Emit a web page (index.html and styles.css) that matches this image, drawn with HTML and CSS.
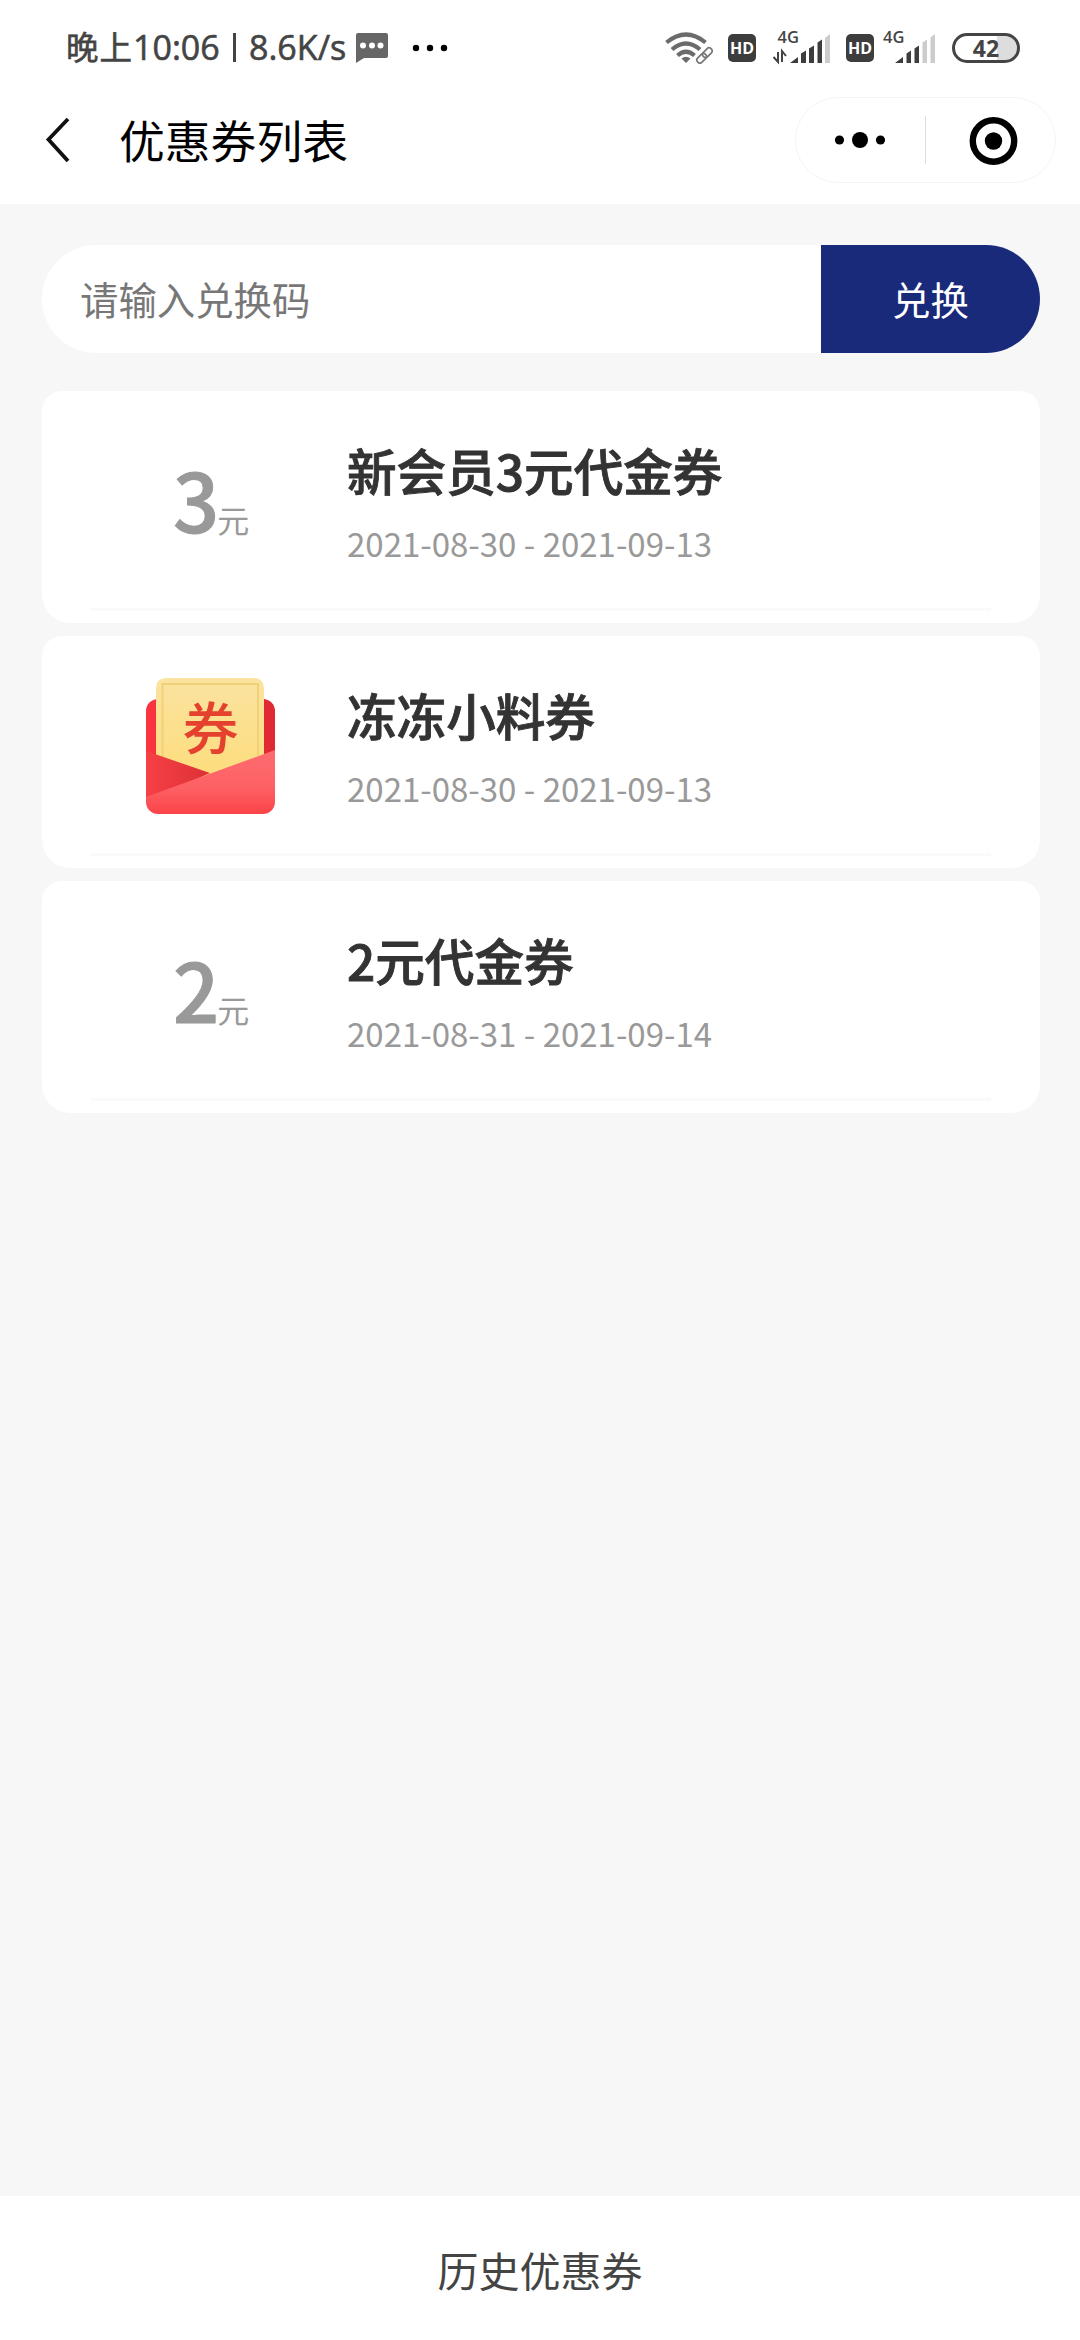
FILE: index.html
```html
<!DOCTYPE html>
<html lang="zh-CN">
<head>
<meta charset="utf-8">
<title>优惠券列表</title>
<link rel="stylesheet" href="styles.css">
</head>
<body>
<div class="page">
  <div class="status">
    <span class="clock"><span class="cn">晚上</span>10:06</span>
    <span class="divider"></span>
    <span class="speed">8.6K/s</span>
    <svg class="bubble" width="34" height="32" viewBox="0 0 34 32"><path d="M3 1H31Q33 1 33 3V24Q33 26 31 26H9L1 31V3Q1 1 3 1Z" fill="#666"/><g fill="#fff"><circle cx="8" cy="13.500" r="3"/><circle cx="17" cy="13.500" r="3"/><circle cx="25.500" cy="13.500" r="3"/></g></svg>
    <svg class="more" width="36" height="8" viewBox="0 0 36 8"><circle cx="4" cy="4" r="3.200"/><circle cx="18" cy="4" r="3.200"/><circle cx="32" cy="4" r="3.200"/></svg>
    <div class="signals">
      <svg class="wifi" width="48" height="32" viewBox="0 0 48 32"><g fill="none" stroke="#6b6b6b" stroke-width="4.200"><path d="M1.500 10.500Q21 -5.500 40.500 10.500"/><path d="M7 17.500Q21 5.500 35 17.500"/><path d="M12.500 23.500Q21 16 29.500 23.500"/></g><path d="M16.500 26.500Q21 23 25.500 26.500L21 31Z" fill="#6b6b6b"/><g fill="none" stroke="#777" stroke-width="1.700" transform="rotate(-45 39.500 23.500)"><rect x="30" y="20.500" width="11" height="6" rx="3"/><rect x="38" y="20.500" width="11" height="6" rx="3"/></g></svg>
      <span class="hd">HD</span>
      <svg class="cell first" width="58" height="46" viewBox="0 -6 58 46"><text class="net" x="4.500" y="12">4G</text><path d="M0.500 26L5 31V21M9 31V20L13 25" fill="none" stroke="#444" stroke-width="2"/><g fill="#3d3d3d"><path d="M17 32L25 26V32ZM28 32V22.500L33 19.500V32ZM36 32V17.500L41 14.500V32ZM44.500 32V11.500L49 8.500V32Z"/><path d="M52 32V7L57 3V32Z" fill="#ccc"/></g></svg>
      <span class="hd">HD</span>
      <svg class="cell second" width="54" height="46" viewBox="0 -6 54 46"><text class="net" x="0" y="12">4G</text><g fill="#3d3d3d"><path d="M12 32L20 26V32ZM23.500 32V22.500L28 19.500V32ZM31.500 32V17.500L36 14.500V32Z"/><path d="M39.500 32V11.500L44 8.500V32ZM47.500 32V6.500L52 3V32Z" fill="#ccc"/></g></svg>
      <span class="battery">42</span>
    </div>
  </div>
  <header class="nav">
    <svg class="back" width="26" height="46" viewBox="0 0 26 46"><path d="M23 2L3.500 22.500L23 44" fill="none" stroke="#111" stroke-width="3.800"/></svg>
    <h1 class="nav-title">优惠券列表</h1>
    <div class="capsule">
      <svg width="129" height="84" viewBox="0 0 129 84"><circle cx="43.500" cy="42" r="4.600"/><circle cx="64" cy="42" r="8"/><circle cx="84.500" cy="42" r="4.600"/></svg>
      <span class="capsule-line"></span>
      <svg width="129" height="84" viewBox="0 0 129 84"><circle cx="67.500" cy="43" r="20.700" fill="none" stroke="#000" stroke-width="6.400"/><circle cx="67.500" cy="43" r="8.700"/></svg>
    </div>
  </header>
  <main class="content">
    <div class="redeem">
      <span class="placeholder">请输入兑换码</span>
      <span class="redeem-btn">兑换</span>
    </div>
    <section class="coupons">
      <article class="coupon">
        <div class="value"><b>3</b><span>元</span></div>
        <div class="info"><h2>新会员3元代金券</h2><p>2021-08-30 - 2021-09-13</p></div>
      </article>
      <article class="coupon">
        <div class="value picture">
          <svg width="130" height="138" viewBox="0 0 130 138">
            <defs>
              <linearGradient id="back" x2="1"><stop stop-color="#fa3440"/><stop offset="1" stop-color="#df2932"/></linearGradient>
              <linearGradient id="paper" x2="0" y2="1"><stop stop-color="#fbe3a0"/><stop offset="1" stop-color="#fddc78"/></linearGradient>
              <linearGradient id="flap" x1="0" x2="1"><stop stop-color="#f64046"/><stop offset="1" stop-color="#dc3136"/></linearGradient>
              <linearGradient id="front" x1=".5" x2=".5" y2="1"><stop stop-color="#fe6c70"/><stop offset=".6" stop-color="#fd6064"/><stop offset="1" stop-color="#fb4348"/></linearGradient>
              <clipPath id="body"><rect y="22" width="129" height="115" rx="12"/></clipPath>
            </defs>
            <rect y="22" width="129" height="90" rx="12" fill="url(#back)"/>
            <path d="M10 112V12Q10 1 21 1H107Q118 1 118 12V112Z" fill="url(#paper)"/>
            <path d="M16.500 80V7H112V80" fill="none" stroke="#f1d07a" stroke-width="2"/>
            <text class="glyph" x="64.500" y="72" text-anchor="middle">券</text>
            <g clip-path="url(#body)"><path d="M0 74L64 96L0 125Z" fill="url(#flap)"/><path d="M0 120L129 73V137H0Z" fill="url(#front)"/></g>
          </svg>
        </div>
        <div class="info"><h2>冻冻小料券</h2><p>2021-08-30 - 2021-09-13</p></div>
      </article>
      <article class="coupon">
        <div class="value"><b>2</b><span>元</span></div>
        <div class="info"><h2>2元代金券</h2><p>2021-08-31 - 2021-09-14</p></div>
      </article>
    </section>
  </main>
  <footer class="history">历史优惠券</footer>
</div>
</body>
</html>
```
FILE: styles.css
```css
* { box-sizing: border-box; }
body {
  margin: 0;
  font-family: "Noto Sans CJK SC", sans-serif;
  color: #333;
  background: #f7f7f7;
}
h1, h2, p { margin: 0; }
svg { display: block; flex: none; }
.page {
  width: 1080px;
  height: 2340px;
  display: flex;
  flex-direction: column;
}

/* status bar */
.status {
  height: 95px;
  padding: 0 60px 0 66px;
  display: flex;
  align-items: center;
  background: #fff;
  font: 500 34px/95px "Open Sans", "Noto Sans CJK SC", sans-serif;
  color: #444;
}
.clock, .speed { -webkit-text-stroke: .6px #444; }
.clock { width: 156px; white-space: nowrap; }
.cn { font: 400 32.500px/1 "Noto Sans CJK SC", sans-serif; letter-spacing: 1px; }
.divider { width: 3px; height: 29px; margin: 0 13px 0 11px; background: #444; }
.speed { width: 107px; }
.bubble { margin-left: -1px; }
.more { margin-left: 23px; }
.signals { margin-left: auto; display: flex; align-items: center; }
.hd {
  width: 28px;
  height: 28px;
  border-radius: 5px;
  background: #3d3d3d;
  color: #fff;
  font: 700 16px/28px "Open Sans", sans-serif;
  text-align: center;
}
.wifi { margin-right: 15px; }
.cell.first { margin: 0 15px 0 17px; }
.cell.second { margin: 0 15px 0 9px; }
.net { font: 600 16.500px "Open Sans", sans-serif; fill: #444; }
.battery {
  width: 68px;
  height: 30px;
  border: 3px solid #444;
  border-radius: 15px;
  background: linear-gradient(90deg, #fff 67%, #ddd 67%);
  font: 700 23px/24px "Open Sans", sans-serif;
  text-align: center;
}

/* title bar */
.nav {
  height: 109px;
  padding: 2px 24px 0 45px;
  display: flex;
  align-items: flex-start;
  background: #fff;
}
.back { margin-top: 20px; }
.nav-title {
  margin-left: 48px;
  font-size: 45.800px;
  font-weight: 400;
  line-height: 85px;
  color: #000;
}
.capsule {
  width: 261px;
  height: 86px;
  margin-left: auto;
  display: flex;
  align-items: center;
  border: 1px solid #f4f4f4;
  border-radius: 43px;
}
.capsule-line { flex: none; width: 1px; height: 48px; background: #ddd; }

/* content */
.content { flex: 1; padding: 41px 40px 0 42px; }
.redeem {
  height: 108px;
  display: flex;
  border-radius: 54px;
  overflow: hidden;
  background: #fff;
  font-size: 38.400px;
  line-height: 106px;
}
.placeholder { flex: 1; padding-left: 38px; color: #777; }
.redeem-btn { width: 219px; background: #1a2a7b; color: #fff; text-align: center; }
.coupons { margin-top: 38px; display: grid; gap: 13px; }
.coupon {
  height: 232px;
  display: grid;
  grid-template-columns: 305px 1fr;
  border-radius: 20px 20px 28px 28px;
  background: linear-gradient(#fafafa, #fafafa) 50% 217px / 900px 3px no-repeat #fff;
}
.value {
  padding: 47px 0 0 131px;
  display: flex;
  align-items: baseline;
  color: #999;
}
.value b { font-size: 81px; font-weight: 500; line-height: 120px; letter-spacing: -2px; -webkit-text-stroke: 1px #999; }
.value span { font-size: 32px; }
.picture { padding: 41px 0 0 104px; }
.glyph { font: 500 56px "Noto Sans CJK SC", sans-serif; fill: #e5412f; }
.info h2 { margin-top: 42px; font-size: 49.600px; font-weight: 500; line-height: 72px; -webkit-text-stroke: .9px #333; }
.info p { margin-top: 14px; font-size: 33px; line-height: 48px; color: #999; }

.history {
  height: 144px;
  background: #fff;
  font-size: 41px;
  line-height: 147px;
  text-align: center;
  color: #444;
}
```
